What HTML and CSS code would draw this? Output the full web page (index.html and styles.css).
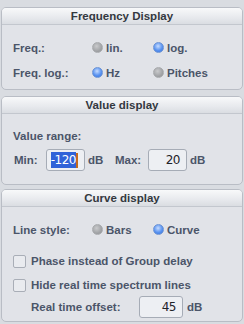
FILE: index.html
```html
<!DOCTYPE html>
<html>
  <head>
    <meta charset="UTF-8" />
    <title>Display settings</title>
    <link rel="stylesheet" href="styles.css">
  </head>
  <body>
    <div class="panel p1">
      <div class="head">Frequency Display</div>
      <div class="body">
        <div class="row">
          <span class="lbl">Freq.:</span>
          <span class="opt"><i class="radio"></i>lin.</span>
          <span class="opt"><i class="radio on"></i>log.</span>
        </div>
        <div class="row">
          <span class="lbl">Freq. log.:</span>
          <span class="opt"><i class="radio on"></i>Hz</span>
          <span class="opt"><i class="radio"></i>Pitches</span>
        </div>
      </div>
    </div>

    <div class="panel p2">
      <div class="head">Value display</div>
      <div class="body">
        <div class="lbl range">Value range:</div>
        <div class="vrow">
          <span class="lbl min">Min:</span>
          <span class="field"><span class="sel">-120</span><span class="caret"></span></span>
          <span class="unit">dB</span>
          <span class="lbl max">Max:</span>
          <span class="field">20</span>
          <span class="unit">dB</span>
        </div>
      </div>
    </div>

    <div class="panel p3">
      <div class="head">Curve display</div>
      <div class="body">
        <div class="row">
          <span class="lbl">Line style:</span>
          <span class="opt"><i class="radio"></i>Bars</span>
          <span class="opt"><i class="radio on"></i>Curve</span>
        </div>
        <div class="check first"><i class="box"></i>Phase instead of Group delay</div>
        <div class="check"><i class="box"></i>Hide real time spectrum lines</div>
        <div class="offset">
          <span class="lbl">Real time offset:</span>
          <span class="field wide">45</span>
          <span class="unit">dB</span>
        </div>
      </div>
    </div>
  </body>
</html>
```

FILE: styles.css
```css
*{margin: 0;padding: 0;box-sizing: border-box}
body{
  background: #d9dce1;
  font-family: "Liberation Sans", Arial, sans-serif;
  font-size: 11.5px;
  font-weight: bold;
  color: #4b5569;
  width: 244px;
  height: 324px;
  overflow: hidden;
  padding-top: 7px;
}
.panel{
  margin: 0 1px 0 1px;
  border: 1px solid #b9bdc5;
  border-radius: 5px;
  background: #e1e3e8;
  overflow: hidden;
}
.p2{margin-top: 6px}
.p3{margin-top: 4px}
.head{
  height: 17px;
  line-height: 16px;
  text-align: center;
  color: #333840;
  background: linear-gradient(#f8f9fa, #e7e9ed 60%, #dadde2);
  border-bottom: 1px solid #c3c7ce;
}
.p1 .body{height: 64px;padding-top: 10px}
.p2 .body{height: 70px;padding-top: 14px}
.p3 .body{height: 114px;padding-top: 10px}
.row{
  display: flex;
  align-items: center;
  height: 25px;
  padding-left: 11px;
}
.row .lbl{width: 79px}
.opt{
  display: flex;
  align-items: center;
  width: 61px;
}
.radio{
  display: inline-block;
  width: 11px;
  height: 11px;
  border-radius: 50%;
  margin-right: 3px;
  background: radial-gradient(circle at 40% 35%, #c9cacc, #9c9ea1 70%, #8d8f92);
  border: 1px solid #a9abae;
}
.radio.on{
  background: radial-gradient(circle at 45% 35%, #c6dcff, #5a93f0 55%, #2f6fdc);
  border-color: #6d94d4;
}
.range{padding-left: 11px;height: 16px;line-height: 16px}
.vrow{
  display: flex;
  align-items: center;
  margin-top: 4px;
  padding-left: 12px;
  height: 24px;
}
.min{width: 32px}
.max{width: 33px}
.field{
  display: inline-flex;
  align-items: center;
  justify-content: flex-end;
  width: 39px;
  height: 22px;
  padding-right: 6px;
  border: 1px solid #a6acb6;
  border-radius: 3px;
  background: #edeff3;
  font-family: "DejaVu Sans", sans-serif;
  font-weight: normal;
  font-size: 12px;
  color: #1e2228;
  letter-spacing: -0.5px;
}
.field.wide{width: 44px}
.sel{
  background: #2f62d8;
  color: #fff;
  padding: 1px 0;
  line-height: 14px;
}
.caret{
  display: inline-block;
  width: 2px;
  height: 15px;
  background: #c46a1c;
}
.unit{padding-left: 3px;width: 30px}
.check{
  display: flex;
  align-items: center;
  height: 24px;
  padding-left: 11px;
}
.check.first{margin-top: 7px}
.box{
  display: inline-block;
  width: 13px;
  height: 13px;
  margin-right: 5px;
  border: 1px solid #a9aeb7;
  border-radius: 2px;
  background: #e9ebef;
}
.offset{
  display: flex;
  align-items: center;
  height: 22px;
  margin-top: -1px;
  padding-left: 29px;
}
.offset .lbl{width: 108px}
.offset .unit{padding-left: 4px}
```
